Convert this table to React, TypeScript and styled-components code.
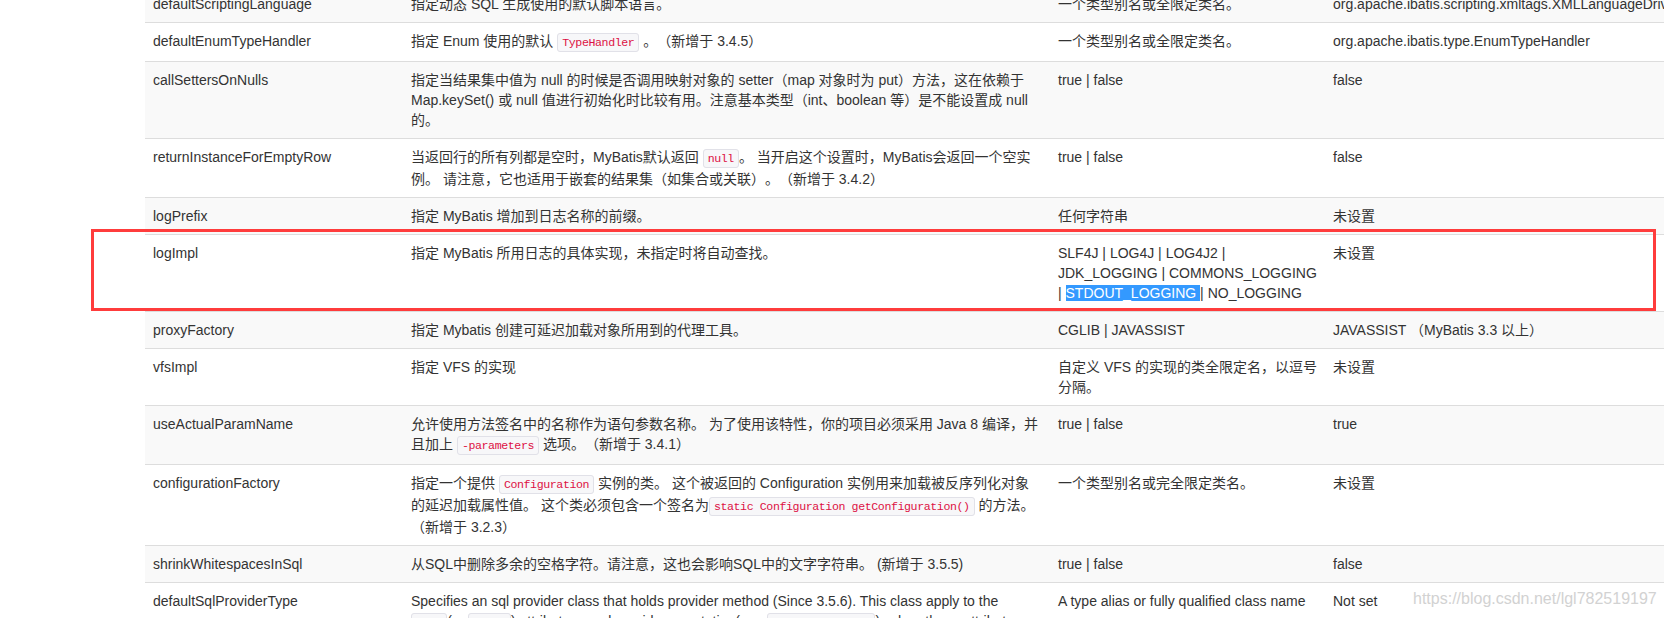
import React from "react";
import styled, { createGlobalStyle } from "styled-components";

const GlobalStyle = createGlobalStyle`
  html, body {
    margin: 0;
    padding: 0;
    background: #ffffff;
    overflow: hidden;
  }
  body {
    font-family: "Liberation Sans", Arial, "Noto Sans CJK SC", sans-serif;
    font-size: 14px;
    line-height: 20px;
    color: #333333;
    text-spacing-trim: space-all;
  }
`;

const Page = styled.div`
  position: relative;
  width: 1664px;
  height: 618px;
  overflow: hidden;
`;

const Sheet = styled.div`
  padding-left: 145px;
  margin-top: -15px;
`;

const Table = styled.table`
  width: 1600px;
  table-layout: fixed;
  border-collapse: collapse;
  border-spacing: 0;
`;

const Col = styled.col<{ $w: number }>`
  width: ${(p) => p.$w}px;
`;

const Row = styled.tr<{ $striped: boolean }>`
  background: ${(p) => (p.$striped ? "#f9f9f9" : "#ffffff")};
`;

const Cell = styled.td`
  padding: 8px;
  vertical-align: top;
  border-top: 1px solid #dddddd;
  white-space: normal;
  overflow: visible;
`;

const Code = styled.code`
  font-family: "Liberation Mono", "DejaVu Sans Mono", monospace;
  font-size: 11.6px;
  letter-spacing: -0.4px;
  color: #dd1144;
  background: #f7f7f9;
  border: 1px solid #e1e1e8;
  border-radius: 3px;
  padding: 2px 4px;
`;

const Selected = styled.span`
  background: #3399ff;
  color: #ffffff;
`;

const CalloutBox = styled.div`
  position: absolute;
  left: 91px;
  top: 229px;
  width: 1565px;
  height: 82px;
  box-sizing: border-box;
  border: 3px solid #ff3c3c;
  pointer-events: none;
`;

const Watermark = styled.div`
  position: absolute;
  left: 1413px;
  top: 589px;
  font-family: "Liberation Sans", Arial, sans-serif;
  font-size: 16px;
  line-height: 20px;
  color: #d2d2d2;
  white-space: nowrap;
`;

type Setting = {
  name: string;
  desc: React.ReactNode;
  values: React.ReactNode;
  def: React.ReactNode;
};

const settings: Setting[] = [
  {
    name: "defaultScriptingLanguage",
    desc: "指定动态 SQL 生成使用的默认脚本语言。",
    values: "一个类型别名或全限定类名。",
    def: "org.apache.ibatis.scripting.xmltags.XMLLanguageDriver",
  },
  {
    name: "defaultEnumTypeHandler",
    desc: (
      <>
        指定 Enum 使用的默认 <Code>TypeHandler</Code> 。（新增于 3.4.5）
      </>
    ),
    values: "一个类型别名或全限定类名。",
    def: "org.apache.ibatis.type.EnumTypeHandler",
  },
  {
    name: "callSettersOnNulls",
    desc: (
      <>
        指定当结果集中值为 null 的时候是否调用映射对象的 setter（map 对象时为 put）方法，这在依赖于
        <br />
        Map.keySet() 或 null 值进行初始化时比较有用。注意基本类型（int、boolean 等）是不能设置成 null
        <br />
        的。
      </>
    ),
    values: "true | false",
    def: "false",
  },
  {
    name: "returnInstanceForEmptyRow",
    desc: (
      <>
        当返回行的所有列都是空时，MyBatis默认返回 <Code>null</Code>。 当开启这个设置时，MyBatis会返回一个空实
        <br />
        例。 请注意，它也适用于嵌套的结果集（如集合或关联）。（新增于 3.4.2）
      </>
    ),
    values: "true | false",
    def: "false",
  },
  {
    name: "logPrefix",
    desc: "指定 MyBatis 增加到日志名称的前缀。",
    values: "任何字符串",
    def: "未设置",
  },
  {
    name: "logImpl",
    desc: "指定 MyBatis 所用日志的具体实现，未指定时将自动查找。",
    values: (
      <>
        SLF4J | LOG4J | LOG4J2 |
        <br />
        JDK_LOGGING | COMMONS_LOGGING
        <br />| <Selected>STDOUT_LOGGING </Selected>| NO_LOGGING
      </>
    ),
    def: "未设置",
  },
  {
    name: "proxyFactory",
    desc: "指定 Mybatis 创建可延迟加载对象所用到的代理工具。",
    values: "CGLIB | JAVASSIST",
    def: "JAVASSIST （MyBatis 3.3 以上）",
  },
  {
    name: "vfsImpl",
    desc: "指定 VFS 的实现",
    values: (
      <>
        自定义 VFS 的实现的类全限定名，以逗号
        <br />
        分隔。
      </>
    ),
    def: "未设置",
  },
  {
    name: "useActualParamName",
    desc: (
      <>
        允许使用方法签名中的名称作为语句参数名称。 为了使用该特性，你的项目必须采用 Java 8 编译，并
        <br />
        且加上 <Code>-parameters</Code> 选项。（新增于 3.4.1）
      </>
    ),
    values: "true | false",
    def: "true",
  },
  {
    name: "configurationFactory",
    desc: (
      <>
        指定一个提供 <Code>Configuration</Code> 实例的类。 这个被返回的 Configuration 实例用来加载被反序列化对象
        <br />
        的延迟加载属性值。 这个类必须包含一个签名为<Code>static Configuration getConfiguration()</Code> 的方法。
        <br />
        （新增于 3.2.3）
      </>
    ),
    values: "一个类型别名或完全限定类名。",
    def: "未设置",
  },
  {
    name: "shrinkWhitespacesInSql",
    desc: "从SQL中删除多余的空格字符。请注意，这也会影响SQL中的文字字符串。 (新增于 3.5.5)",
    values: "true | false",
    def: "false",
  },
  {
    name: "defaultSqlProviderType",
    desc: (
      <>
        Specifies an sql provider class that holds provider method (Since 3.5.6). This class apply to the
        <br />
        <Code>type</Code>(or <Code>value</Code>) attribute on sql provider annotation(e.g.{" "}
        <Code>@SelectProvider</Code>), when these attribute was omitted.
      </>
    ),
    values: "A type alias or fully qualified class name",
    def: "Not set",
  },
];

export default function App() {
  return (
    <>
      <GlobalStyle />
      <Page>
        <Sheet>
          <Table>
            <colgroup>
              <Col $w={258} />
              <Col $w={647} />
              <Col $w={275} />
              <Col $w={420} />
            </colgroup>
            <tbody>
              {settings.map((s, i) => (
                <Row key={s.name} $striped={i % 2 === 0}>
                  <Cell>{s.name}</Cell>
                  <Cell>{s.desc}</Cell>
                  <Cell>{s.values}</Cell>
                  <Cell>{s.def}</Cell>
                </Row>
              ))}
            </tbody>
          </Table>
        </Sheet>
        <CalloutBox />
        <Watermark>https://blog.csdn.net/lgl782519197</Watermark>
      </Page>
    </>
  );
}
